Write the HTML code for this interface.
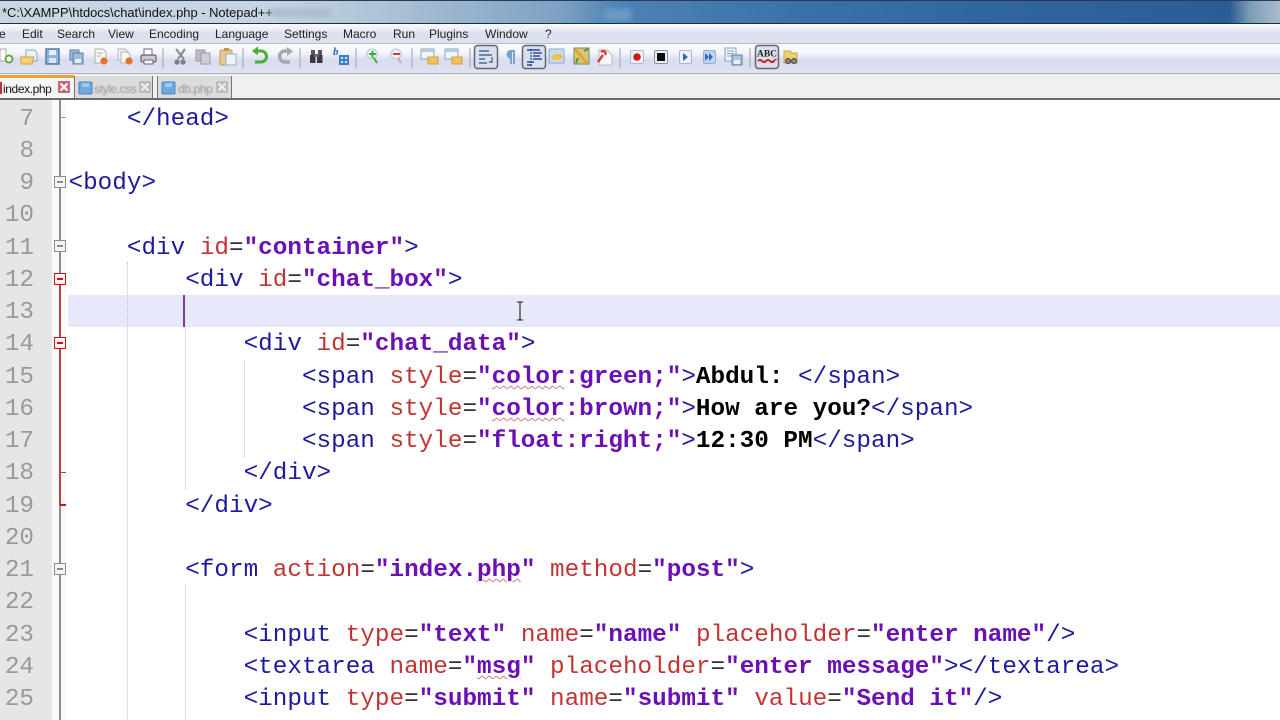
<!DOCTYPE html>
<html><head><meta charset="utf-8"><style>
html,body{margin:0;padding:0;width:1280px;height:720px;overflow:hidden;background:#fff}
body{position:relative;font-family:"Liberation Sans",sans-serif}
.abs,.l,.n{position:absolute}
#title{left:0;top:0;width:1280px;height:23px;background:linear-gradient(90deg,#c9d6e2 0,#c4d4e3 280px,#a9bfd4 400px,#7ea1c4 560px,#4d82b5 620px,#3a72a8 800px,#2f659e 1000px,#2c5c94 1230px,#7d9cb8 1250px,#a9bccb 1280px);border-top:1px solid #2a3a55;box-sizing:border-box}
#tt{left:2px;top:5px;font-size:12.9px;line-height:15px;color:#111;white-space:pre}
#menu{left:0;top:23px;width:1280px;height:21px;background:linear-gradient(#f7f8fc,#eef0f7 25%,#dce1ef 45%,#dce1ef);border-top:1px solid #16303f;border-bottom:1px solid #bdbcc8;box-sizing:border-box}
.m{position:absolute;top:27px;font-size:12px;line-height:14px;color:#222;white-space:pre}
#tb{left:0;top:44px;width:1280px;height:30px;background:linear-gradient(#fafbfe,#f4f6fc 30%,#d8dcee 55%,#dfe3f1);border-bottom:1px solid #aeb0b8;box-sizing:border-box}
#tabs{left:0;top:74px;width:1280px;height:26px;background:#f0f0f0;border-bottom:2px solid #6a6a6a;box-sizing:border-box}
#ed{left:0;top:100px;width:1280px;height:620px;background:#fff}
#g1{left:0;top:100px;width:52px;height:620px;background:#e6e6e6}
#g2{left:52px;top:100px;width:14px;height:620px;background:#fafafa}
#cur{left:68px;top:295px;width:1212px;height:32px;background:#e8e8fb}
.l{left:68.500px;font:24.32px/32px "Liberation Mono",monospace;white-space:pre;color:#1c1c9c;height:32px;margin-top:2px;filter:blur(.25px)}
.n{left:0;width:34px;text-align:right;font:24.28px/32px "Liberation Mono",monospace;color:#999;height:32px;margin-top:2px}
i{font-style:normal;color:#c23434}
b{color:#6a10b4;font-weight:bold}
u{font-style:normal;text-decoration:none;color:#000;font-weight:bold}
s{text-decoration:none;color:#333}
.w{text-decoration:underline wavy #dc7a7a 1px;text-underline-offset:2px}
.g{position:absolute;width:0;border-left:1px dotted #c6c6c6}
.fb{position:absolute;left:54px;width:10px;height:10px;border:1px solid #8c8c8c;background:#f4f4f4;box-sizing:content-box}
.fb:after{content:"";position:absolute;left:2px;right:2px;top:4px;height:2px;background:#8c8c8c}
.fb.r{border-color:#c01818;background:#fbeeee}
.fb.r:after{background:#c01818}
.t{position:absolute;top:82px;font-size:12px;line-height:14px;letter-spacing:-.4px;white-space:pre}
</style></head><body>
<div class="abs" id="title"></div>
<div class="abs" id="tt">*C:\XAMPP\htdocs\chat\index.php - Notepad++</div>
<div class="abs" style="left:270px;top:9px;width:60px;height:8px;background:#a8bbce;filter:blur(3px)"></div>
<div class="abs" style="left:605px;top:9px;width:26px;height:12px;background:#6c9bc6;filter:blur(3px)"></div>
<div class="abs" id="menu"></div>
<span class="m" style="left:-1px">e</span><span class="m" style="left:22px">Edit</span><span class="m" style="left:57px">Search</span><span class="m" style="left:108px">View</span><span class="m" style="left:149px">Encoding</span><span class="m" style="left:215px">Language</span><span class="m" style="left:284px">Settings</span><span class="m" style="left:343px">Macro</span><span class="m" style="left:393px">Run</span><span class="m" style="left:429px">Plugins</span><span class="m" style="left:485px">Window</span><span class="m" style="left:545px">?</span>
<div class="abs" id="tb"></div>
<svg class="abs" style="left:0;top:43px;filter:blur(.35px)" width="830" height="30" viewBox="0 0 830 30">
<g fill="none" stroke="#9a9aa2"><path d="M163 5v20M243 5v20M300 5v20M356 5v20M412 5v20M470 5v20M620 5v20M750 5v20" stroke="#a0a2ac"/></g>
<!-- new -->
<path d="M0 6h6v12H0z" fill="#fff" stroke="#aaa"/><circle cx="9" cy="16" r="3.5" fill="#fff" stroke="#5aa33a" stroke-width="1.8"/>
<!-- open -->
<path d="M26 7h9l2 3v8H26z" fill="#eef3fa" stroke="#8aa6c6"/><path d="M21 14h13l-2 7H21z" fill="#f3d27c" stroke="#d0a040"/>
<!-- save -->
<rect x="46" y="6" width="13" height="15" fill="#8fb6de" stroke="#4a76a8" stroke-width="1.4"/><rect x="49" y="7" width="7" height="5" fill="#e8f0fa"/><rect x="49" y="15" width="7" height="5" fill="#dce6f2"/>
<!-- save all -->
<rect x="70" y="7" width="9" height="10" fill="#9dbad8" stroke="#5b82a8"/><rect x="73" y="10" width="10" height="11" fill="#9dbad8" stroke="#5b82a8"/><rect x="75" y="16" width="6" height="4" fill="#e4ebf3"/>
<!-- close -->
<path d="M95 6h8l3 3v11H95z" fill="#f6f6f4" stroke="#b2b2aa"/><path d="M97 10h6M97 13h4" stroke="#b0b0b0"/><circle cx="104" cy="18" r="3.6" fill="#e8702a"/>
<!-- close all -->
<path d="M118 6h7l3 3v8h-10z" fill="#f4f4f2" stroke="#b2b2aa"/><path d="M121 9h7l2 3v8h-9z" fill="#f8f8f6" stroke="#b2b2aa"/><circle cx="129" cy="18" r="3.6" fill="#e8702a"/>
<!-- print -->
<path d="M144 6h8v6h-8z" fill="#fff" stroke="#6c6c74"/><rect x="141" y="12" width="15" height="7" rx="1.5" fill="#c9ccd8" stroke="#62626c" stroke-width="1.2"/><rect x="144" y="17" width="9" height="4" fill="#f4f4f4" stroke="#6c6c74"/>
<!-- cut -->
<path d="M176 6l8 10M185 6l-7 10" stroke="#8a8e98" stroke-width="2.2" fill="none"/><circle cx="177" cy="19" r="2.6" fill="#7a7e88"/><circle cx="183" cy="19" r="2.6" fill="#7a7e88"/>
<!-- copy -->
<rect x="196" y="7" width="9" height="11" fill="#bcbcc2" stroke="#9a9aa4"/><rect x="201" y="10" width="9" height="11" fill="#d0d0d4" stroke="#9a9aa4"/>
<!-- paste -->
<rect x="220" y="7" width="12" height="15" rx="1" fill="#e8c890" stroke="#c49a50"/><rect x="224" y="5" width="5" height="3" fill="#c49a50"/><rect x="226" y="11" width="10" height="11" fill="#f2f4fa" stroke="#9cb0c8"/>
<!-- undo -->
<path d="M254 8h7a5.5 5.5 0 0 1 0 11h-6" fill="none" stroke="#48b02e" stroke-width="3"/><path d="M258 3.500l-6 4.500 6 4.500z" fill="#48b02e"/>
<!-- redo -->
<path d="M291 8h-6a5.500 5.500 0 0 0 0 11h5" fill="none" stroke="#a6a8ae" stroke-width="3.400"/><path d="M287 4l6 4.500-6 4.500z" fill="#a6a8ae"/>
<!-- find -->
<rect x="310" y="12" width="5.500" height="8" fill="#3a3a3e"/><rect x="317" y="12" width="5.500" height="8" fill="#3a3a3e"/><rect x="311" y="7" width="4" height="5" fill="#55555a"/><rect x="318" y="7" width="4" height="5" fill="#55555a"/><rect x="314" y="11" width="5" height="3" fill="#6a6a6e"/>
<!-- replace -->
<text x="333" y="12" font-family="Liberation Serif" font-style="italic" font-weight="bold" font-size="11" fill="#2a5bc0">b</text><rect x="339" y="12" width="10" height="10" fill="#3f7ecb"/><path d="M341 14h2v2h-2zM345 14h2v2h-2zM341 18h2v2h-2zM345 18h2v2h-2z" fill="#dbe8f8"/>
<!-- zoom -->
<circle cx="372" cy="11" r="5" fill="#eef3f8" stroke="#b8c4d0"/><path d="M369 11h7M372.500 8v7M374 15l3 5" stroke="#3fa83a" stroke-width="2"/>
<circle cx="396" cy="11" r="5" fill="#eef3f8" stroke="#b8c4d0"/><path d="M393 11h7" stroke="#d83a3a" stroke-width="2"/><path d="M398 15l3 5" stroke="#d8a0a0" stroke-width="2"/>
<!-- sync -->
<rect x="421" y="6" width="13" height="10" fill="#f2f6fb" stroke="#8ea4ba"/><rect x="421" y="6" width="13" height="3" fill="#b6cadf"/><path d="M428 14h10v7h-10z" fill="#f3c25e" stroke="#d69e34"/>
<rect x="445" y="6" width="13" height="10" fill="#f2f6fb" stroke="#8ea4ba"/><rect x="445" y="6" width="13" height="3" fill="#b6cadf"/><path d="M452 14h10v7h-10z" fill="#f3c25e" stroke="#d69e34"/>
<!-- wrap box -->
<rect x="474.500" y="2.500" width="23" height="23" rx="3" fill="#d9dfec" stroke="#5f6672" stroke-width="1.500"/><path d="M479 8h10M479 12h13M479 16h6M479 20h8M492 14v5h-3" stroke="#4a6a8c" stroke-width="1.400" fill="none"/>
<!-- pilcrow -->
<path d="M509 8h6M511 8v13M514 8v13M511 8a3.500 3.500 0 0 0 0 7" stroke="#7aa2cc" stroke-width="2" fill="#7aa2cc"/>
<!-- indent box -->
<rect x="522.500" y="2.500" width="23" height="23" rx="3" fill="#d9dfec" stroke="#5f6672" stroke-width="1.500"/><path d="M531 6v18" stroke="#3a62c0" stroke-dasharray="2 1" stroke-width="1.500"/><path d="M527 7h13M533 10h9M533 13h7M533 16h9M527 19h7M527 22h5" stroke="#2a4c9c" stroke-width="1.500"/>
<!-- lang -->
<rect x="549" y="6" width="15" height="14" rx="1" fill="#c7dbef" stroke="#8ca8c4"/><path d="M551 14l4-3h6l2 4-4 2h-5z" fill="#eec050"/>
<!-- map -->
<rect x="574" y="5" width="15" height="16" fill="#d8c878" stroke="#6c8a5c"/><path d="M575 6l12 14" stroke="#e6a430" stroke-width="3"/><path d="M578 15l-2 5M584 8l4-2" stroke="#5a8a4a" stroke-width="2"/>
<!-- func -->
<path d="M599 7h8l5 5v10h-13z" fill="#f8f8f8" stroke="#b8b8b8"/><path d="M598 19l5-7M601 9c3-2 6 0 4 3" stroke="#d83a30" stroke-width="2.400" fill="none"/>
<!-- record -->
<rect x="630.500" y="7.500" width="13" height="13" rx="1.500" fill="#eef1f8" stroke="#b0b8c8"/><circle cx="637" cy="14" r="3.800" fill="#d01818"/>
<rect x="654.500" y="7.500" width="13" height="13" rx="1.500" fill="#eef1f8" stroke="#8a909c"/><rect x="657" y="10" width="8" height="8" fill="#0c0c0c"/>
<rect x="679.500" y="7.500" width="12" height="13" rx="1.500" fill="#eef1f8" stroke="#a8b8d4"/><path d="M683 10l5 4-5 4z" fill="#2f62c0"/>
<rect x="703.500" y="7.500" width="12" height="13" rx="1.500" fill="#c4d4ec" stroke="#98b0d4"/><path d="M705 10l4 4-4 4zM709 10l4 4-4 4z" fill="#3468c8"/>
<!-- save macro -->
<rect x="725" y="5" width="11" height="13" fill="#f0f4fa" stroke="#88a4c0"/><path d="M727 8h7M727 10.500h7M727 13h7" stroke="#88a4c0"/><rect x="732" y="12" width="10" height="10" fill="#a8c4de" stroke="#5a80a4"/><rect x="734" y="17" width="6" height="4" fill="#eef"/>
<!-- ABC box -->
<rect x="755.500" y="2.500" width="23" height="23" rx="3" fill="#d9dfec" stroke="#5f6672" stroke-width="1.500"/><text x="767" y="13.500" text-anchor="middle" font-family="Liberation Serif" font-weight="bold" font-size="9.500" fill="#222">ABC</text><path d="M758 18q2-2 4 0t4 0 4 0 4 0 2-1" stroke="#d02020" stroke-width="2" fill="none"/>
<!-- folder -->
<path d="M784 8h6l2 2h5v10h-13z" fill="#f0d070" stroke="#cca848"/><circle cx="788" cy="18" r="2.500" fill="#888" stroke="#444"/><circle cx="794" cy="18" r="2.500" fill="#888" stroke="#444"/>
</svg>
<div class="abs" id="tabs"></div>
<div class="abs" style="left:-2px;top:75px;width:76px;height:23px;background:#f6f6f6;border-top:3px solid #f0a030;box-sizing:border-box"></div>
<div class="abs" style="left:74px;top:76px;width:79px;height:22px;background:#dcdcdc;border-right:1px solid #777;border-left:1px solid #777;box-sizing:border-box"></div>
<div class="abs" style="left:157px;top:76px;width:75px;height:22px;background:#dcdcdc;border-right:1px solid #777;border-left:1px solid #777;box-sizing:border-box"></div>
<div class="abs" style="left:0;top:82px;width:2px;height:12px;background:#c03030"></div>
<div class="t" style="left:3px;color:#111">index.php</div>
<div class="t" style="left:94px;color:#9a9a9a;filter:blur(.4px)">style.css</div>
<div class="t" style="left:178px;color:#9a9a9a;filter:blur(.4px)">db.php</div>
<svg class="abs" style="left:0;top:74px" width="240" height="26" viewBox="0 0 240 26">
<rect x="58" y="7" width="12" height="12" rx="1" fill="#c86478"/><path d="M60.500 9.500l7 7M67.500 9.500l-7 7" stroke="#fff" stroke-width="2.200"/>
<rect x="79" y="8" width="13" height="12" rx="1" fill="#6fa8dc" stroke="#4a86c4"/><rect x="82" y="9" width="7" height="4" fill="#a4c8ea"/>
<rect x="139" y="7" width="12" height="12" rx="1" fill="#bcbcbc"/><path d="M141.500 9.500l7 7M148.500 9.500l-7 7" stroke="#eee" stroke-width="2.200"/>
<rect x="162" y="8" width="13" height="12" rx="1" fill="#6fa8dc" stroke="#4a86c4"/><rect x="165" y="9" width="7" height="4" fill="#a4c8ea"/>
<rect x="216" y="7" width="12" height="12" rx="1" fill="#bcbcbc"/><path d="M218.500 9.500l7 7M225.500 9.500l-7 7" stroke="#eee" stroke-width="2.200"/>
</svg>
<div class="abs" id="ed"></div>
<div class="abs" id="g1"></div>
<div class="abs" id="g2"></div>
<div class="abs" id="cur"></div>
<div class="abs" style="left:59px;top:100px;width:2px;height:620px;background:#8c8c8c"></div>
<div class="abs" style="left:59px;top:284px;width:2px;height:221px;background:#c04040"></div>
<div class="abs" style="left:60px;top:117px;width:6px;height:1px;background:#999"></div>
<div class="abs" style="left:60px;top:472px;width:6px;height:1px;background:#c04040"></div>
<div class="abs" style="left:60px;top:504px;width:6px;height:1.500px;background:#c01818"></div>
<div class="fb" style="top:176px"></div>
<div class="fb" style="top:240px"></div>
<div class="fb r" style="top:273px"></div>
<div class="fb r" style="top:337px"></div>
<div class="fb" style="top:563px"></div>
<div class="g" style="left:127px;top:262px;height:458px"></div>
<div class="g" style="left:185px;top:327px;height:162px"></div>
<div class="g" style="left:185px;top:585px;height:135px"></div>
<div class="g" style="left:244px;top:360px;height:97px"></div>
<div class="n" style="top:102px">7</div><div class="n" style="top:134px">8</div><div class="n" style="top:166px">9</div><div class="n" style="top:198px">10</div><div class="n" style="top:231px">11</div><div class="n" style="top:263px">12</div><div class="n" style="top:295px">13</div><div class="n" style="top:327px">14</div><div class="n" style="top:360px">15</div><div class="n" style="top:392px">16</div><div class="n" style="top:424px">17</div><div class="n" style="top:456px">18</div><div class="n" style="top:489px">19</div><div class="n" style="top:521px">20</div><div class="n" style="top:553px">21</div><div class="n" style="top:585px">22</div><div class="n" style="top:618px">23</div><div class="n" style="top:650px">24</div><div class="n" style="top:682px">25</div>
<div class="l" style="top:102px">    &lt;/head&gt;</div>
<div class="l" style="top:166px">&lt;body&gt;</div>
<div class="l" style="top:231px">    &lt;div <i>id</i><s>=</s><b>"container"</b>&gt;</div>
<div class="l" style="top:263px">        &lt;div <i>id</i><s>=</s><b>"chat_box"</b>&gt;</div>
<div class="l" style="top:327px">            &lt;div <i>id</i><s>=</s><b>"chat_data"</b>&gt;</div>
<div class="l" style="top:360px">                &lt;span <i>style</i><s>=</s><b>"<span class="w">color</span>:green;"</b>&gt;<u>Abdul: </u>&lt;/span&gt;</div>
<div class="l" style="top:392px">                &lt;span <i>style</i><s>=</s><b>"<span class="w">color</span>:brown;"</b>&gt;<u>How are you?</u>&lt;/span&gt;</div>
<div class="l" style="top:424px">                &lt;span <i>style</i><s>=</s><b>"float:right;"</b>&gt;<u>12:30 PM</u>&lt;/span&gt;</div>
<div class="l" style="top:456px">            &lt;/div&gt;</div>
<div class="l" style="top:489px">        &lt;/div&gt;</div>
<div class="l" style="top:553px">        &lt;form <i>action</i><s>=</s><b>"index.<span class="w">php</span>"</b> <i>method</i><s>=</s><b>"post"</b>&gt;</div>
<div class="l" style="top:618px">            &lt;input <i>type</i><s>=</s><b>"text"</b> <i>name</i><s>=</s><b>"name"</b> <i>placeholder</i><s>=</s><b>"enter name"</b>/&gt;</div>
<div class="l" style="top:650px">            &lt;textarea <i>name</i><s>=</s><b>"<span class="w">msg</span>"</b> <i>placeholder</i><s>=</s><b>"enter message"</b>&gt;&lt;/textarea&gt;</div>
<div class="l" style="top:682px">            &lt;input <i>type</i><s>=</s><b>"submit"</b> <i>name</i><s>=</s><b>"submit"</b> <i>value</i><s>=</s><b>"Send it"</b>/&gt;</div>
<div class="abs" style="left:183px;top:295px;width:2px;height:32px;background:#7a3a9a"></div>
<svg class="abs" style="left:514px;top:300px" width="12" height="22" viewBox="0 0 12 22"><path d="M3 2h2.500l.5 1 .5-1H9M6 3v16M3 20h2.500l.5-1 .5 1H9" fill="none" stroke="#222" stroke-width="1.100"/></svg>
</body></html>
